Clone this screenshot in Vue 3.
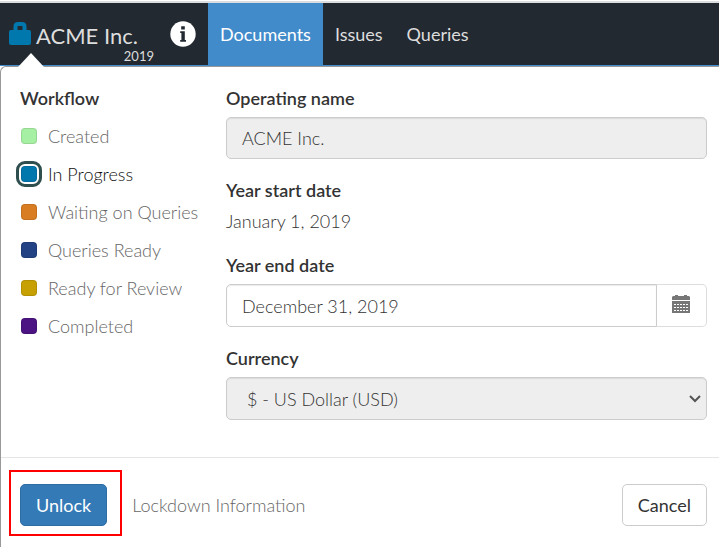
<script setup>
import { ref } from 'vue'

const tabs = [
  { name: 'Documents', active: true },
  { name: 'Issues', active: false },
  { name: 'Queries', active: false },
]

const stages = [
  { name: 'Created', color: '#a6f0a3' },
  { name: 'In Progress', color: '#0078ae' },
  { name: 'Waiting on Queries', color: '#d97d22' },
  { name: 'Queries Ready', color: '#234284' },
  { name: 'Ready for Review', color: '#c7a003' },
  { name: 'Completed', color: '#4b1482' },
]

const stage = ref('In Progress')
const endDate = ref('December 31, 2019')
</script>

<template>
  <div class="page">
    <header class="navbar">
      <a class="brand" href="#">
        <svg class="lock" viewBox="0 0 22 24" aria-hidden="true">
          <path d="M6.500 10V4.500Q6.500 2 9 2H13Q15.500 2 15.500 4.500V10" fill="none" stroke="#0078ae" stroke-width="4" />
          <rect x="0" y="8" width="22" height="15" rx="2" fill="#0078ae" />
        </svg>
        <span class="brand-text">
          <span class="company">ACME Inc.</span>
          <span class="year">2019</span>
        </span>
      </a>
      <button class="info" type="button" aria-label="Information">
        <svg viewBox="0 0 26 26" aria-hidden="true">
          <circle cx="13" cy="13" r="12.700" fill="#fff" />
          <path d="M11.200 5.200h3.600v3.200h-3.600zM10.200 10.300h4.600v8.700h1.200v1.800h-5.800v-1.800h1.200v-6.900h-1.200z" fill="#222931" />
        </svg>
      </button>
      <nav class="tabs">
        <a v-for="tab in tabs" :key="tab.name" href="#" class="tab" :class="{ active: tab.active }">{{ tab.name }}</a>
      </nav>
    </header>

    <form class="panel" @submit.prevent>
      <svg class="caret" viewBox="0 0 26 14" aria-hidden="true">
        <path d="M0 14L13 0L26 14Z" fill="#fff" />
      </svg>
      <div class="content">
        <fieldset class="workflow">
          <legend class="heading">Workflow</legend>
          <label v-for="item in stages" :key="item.name" class="stage">
            <input v-model="stage" type="radio" name="stage" :value="item.name" :style="{ backgroundColor: item.color }">
            <span>{{ item.name }}</span>
          </label>
        </fieldset>

        <div class="fields">
          <div class="field">
            <label class="heading" for="operating-name">Operating name</label>
            <input id="operating-name" class="control" type="text" value="ACME Inc." disabled>
          </div>
          <div class="field">
            <span class="heading">Year start date</span>
            <span class="static">January 1, 2019</span>
          </div>
          <div class="field">
            <label class="heading" for="end-date">Year end date</label>
            <div class="group">
              <input id="end-date" v-model="endDate" class="control" type="text">
              <button class="addon" type="button" aria-label="Choose date">
                <svg viewBox="0 0 18 18" aria-hidden="true">
                  <path d="M1 1h2V0h3v1h6V0h3v1h2l1 1v3H0V2zM0 6h18v12H0z" fill="#777" />
                  <path d="M2 9.500h15M2 12.500h15M2 15.500h15" stroke="#fff" stroke-width="1" stroke-dasharray="2 1" />
                </svg>
              </button>
            </div>
          </div>
          <div class="field">
            <label class="heading" for="currency">Currency</label>
            <div class="select">
              <select id="currency" class="control" disabled>
                <option>$ - US Dollar (USD)</option>
              </select>
              <svg class="chevron" viewBox="0 0 12 8" aria-hidden="true">
                <path d="M1 1L6 6L11 1" fill="none" stroke="#555" stroke-width="2" />
              </svg>
            </div>
          </div>
        </div>
      </div>

      <footer class="footer">
        <div class="highlight">
          <button class="btn primary" type="submit">Unlock</button>
        </div>
        <a class="lockdown" href="#">Lockdown Information</a>
        <button class="btn cancel" type="button">Cancel</button>
      </footer>
    </form>
  </div>
</template>

<style>
body {
  background: #fff;
}
</style>

<style scoped>
.page,
.page * {
  box-sizing: border-box;
}

.page {
  margin-top: 1px;
  border-top: 2px solid #dcdddf;
  font-family: Lato, "Liberation Sans", sans-serif;
  font-size: 18px;
  font-weight: 300;
  line-height: 24px;
  color: #222;
}

a {
  text-decoration: none;
}

button,
input,
select {
  font: inherit;
}

.navbar {
  display: flex;
  align-items: stretch;
  height: 63px;
  background: #222931;
  border-bottom: 1px solid #428bca;
  font-weight: 400;
}

.brand {
  display: flex;
  gap: 5px;
  padding: 19px 0 0 9px;
  color: #ddd;
}

.lock {
  width: 22px;
  height: 24px;
}

.brand-text {
  display: flex;
  flex-direction: column;
  width: 118px;
}

.company {
  font-size: 22px;
  line-height: 27px;
}

.year {
  align-self: flex-end;
  font-size: 13px;
  line-height: 14px;
}

.info {
  display: flex;
  align-self: flex-start;
  margin: 18px 12px 0 16px;
  padding: 0;
  background: none;
  border: 0;
}

.info svg {
  width: 26px;
  height: 26px;
}

.tabs {
  display: flex;
  margin-bottom: -1px;
}

.tab {
  display: flex;
  align-items: center;
  padding: 0 12px 1px;
  color: #ddd;
}

.tab.active {
  background: #428bca;
  color: #fff;
}

.panel {
  position: relative;
  border: 1px solid #999;
  border-width: 1px 0 0 1px;
  border-radius: 6px 0 0 0;
}

.caret {
  position: absolute;
  top: -14px;
  left: 17px;
  width: 26px;
  height: 14px;
}

.content {
  display: flex;
  gap: 20px;
  padding: 19px 12px 37px 19px;
}

.workflow {
  flex: none;
  width: 186px;
  margin: 0;
  padding: 0;
  border: 0;
}

.heading {
  display: block;
  padding: 0;
  line-height: 24px;
  font-weight: 600;
  color: #333;
}

.stage {
  display: flex;
  align-items: center;
  gap: 11px;
  height: 38px;
  padding-left: 1px;
  color: #666;
  white-space: nowrap;
}

.workflow .heading + .stage {
  margin-top: 7px;
}

.stage input {
  appearance: none;
  flex: none;
  width: 16px;
  height: 16px;
  margin: 0;
  border: 1px solid rgba(0, 0, 0, 0.1);
  border-radius: 4px;
}

.stage input:checked {
  outline: 3px solid #2f4f4f;
  outline-offset: 2px;
}

.stage input:checked + span {
  color: #111;
}

.fields {
  display: flex;
  flex: 1;
  flex-direction: column;
  gap: 19px;
  min-width: 0;
}

.field {
  display: flex;
  flex-direction: column;
  gap: 7px;
}

.static {
  line-height: 25px;
  color: #333;
}

.control {
  width: 100%;
  height: 42px;
  padding: 0 15px;
  color: #333;
  background: #fff;
  border: 1px solid #ccc;
  border-radius: 5px;
  box-shadow: inset 0 1px 1px rgba(0, 0, 0, 0.08);
}

.control:disabled {
  background: #eee;
  opacity: 1;
}

.group {
  display: flex;
}

.group .control {
  flex: 1;
  min-width: 0;
  height: 43px;
  border-radius: 5px 0 0 5px;
}

.addon {
  display: flex;
  align-items: center;
  justify-content: center;
  width: 50px;
  padding: 0 2px 4px 0;
  background: #fff;
  border: 1px solid #ddd;
  border-left: 0;
  border-radius: 0 5px 5px 0;
}

.addon svg {
  width: 18px;
  height: 18px;
}

.select {
  display: grid;
  align-items: center;
}

.select > * {
  grid-area: 1 / 1;
}

.select .control {
  appearance: none;
  height: 43px;
  padding-left: 20px;
}

.chevron {
  justify-self: end;
  width: 12px;
  height: 8px;
  margin-right: 6px;
}

.footer {
  display: flex;
  align-items: center;
  padding: 26px 12px 21px 19px;
  border-top: 1px solid #e5e5e5;
}

.highlight {
  position: relative;
}

.highlight::before {
  content: "";
  position: absolute;
  inset: -14px -15px -10px -11px;
  border: 2px solid #f00;
  pointer-events: none;
}

.btn {
  height: 42px;
  padding: 0 15px 1px;
  border: 1px solid #ccc;
  border-radius: 5px;
  background: #fff;
  color: #333;
  font-weight: 400;
}

.btn.primary {
  display: block;
  background: #337ab7;
  border-color: #2e6da4;
  color: #fff;
}

.lockdown {
  margin-left: 25px;
  color: #666;
}

.cancel {
  margin-left: auto;
}
</style>
